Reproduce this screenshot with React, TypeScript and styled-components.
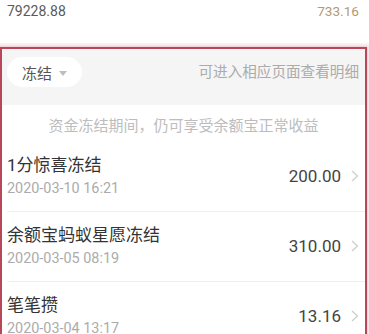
import React from "react";
import styled, { createGlobalStyle } from "styled-components";

const Global = createGlobalStyle`
  html, body { margin: 0; padding: 0; background: #f4f4f4; }
  body { font-family: Roboto, "Noto Sans CJK SC", sans-serif; }
  #root { width: 369px; height: 334px; overflow: hidden; }
`;

const Page = styled.div`
  width: 369px;
  height: 334px;
  overflow: hidden;
  background: #f4f4f4;
`;

const TopBar = styled.div`
  height: 43px;
  box-sizing: border-box;
  padding: 3px 10px 0 7px;
  display: flex;
  justify-content: space-between;
  align-items: flex-start;
  background: #fff;
  font-size: 14px;
  line-height: 16px;
`;

const TopValue = styled.span<{ $gold?: boolean }>`
  color: ${(p) => (p.$gold ? "#b49a72" : "#5a5a5a")};
  font-size: ${(p) => (p.$gold ? "13.6px" : "14px")};
`;

const Frame = styled.div`
  margin: 4px 2px 0 0;
  border: 2px solid #b8475a;
  border-bottom: none;
  box-shadow: 0 0 2px 1px #f3c4cb;
  background: #fff;
`;

const Header = styled.div`
  height: 56px;
  box-sizing: border-box;
  background: #f5f5f5;
  display: flex;
  align-items: flex-start;
  justify-content: space-between;
  padding: 8px 6px 0 5px;
`;

const Pill = styled.div`
  height: 30px;
  width: 75px;
  box-sizing: border-box;
  border-radius: 15px;
  background: #fff;
  display: flex;
  align-items: center;
  gap: 7px;
  padding-left: 15px;
  color: #555;
  font-size: 15px;
`;

const Caret = styled.span`
  width: 0;
  height: 0;
  border-left: 4px solid transparent;
  border-right: 4px solid transparent;
  border-top: 5px solid #bdbdbd;
  margin-top: 2px;
`;

const HeaderHint = styled.span`
  margin-top: 7px;
  color: #ababab;
  font-size: 14.6px;
  line-height: 17px;
`;

const Notice = styled.div`
  height: 37px;
  display: flex;
  align-items: center;
  justify-content: center;
  color: #bdbdbd;
  font-size: 15px;
  padding-top: 1px;
  box-sizing: border-box;
`;

const Row = styled.div`
  height: 70px;
  box-sizing: border-box;
  margin-left: 5px;
  padding: 13px 6px 0 0;
  border-bottom: 1px solid #efefef;
  display: flex;
  justify-content: space-between;
`;

const RowLeft = styled.div`
  display: flex;
  flex-direction: column;
`;

const Title = styled.div`
  font-size: 17px;
  line-height: 20px;
  color: #333;
`;

const Date = styled.div`
  margin-top: 5px;
  font-size: 14.4px;
  line-height: 18px;
  color: #ababab;
`;

const RowRight = styled.div`
  display: flex;
  align-items: center;
  gap: 10px;
  height: 44px;
  margin-top: -1px;
`;

const Amount = styled.span`
  font-size: 17px;
  color: #444;
`;

const Chevron = () => (
  <svg width="8" height="12" viewBox="0 0 8 12">
    <polyline points="1,1 6.5,6 1,11" fill="none" stroke="#cfcfcf" strokeWidth="1.3" />
  </svg>
);

const items = [
  { title: "1分惊喜冻结", date: "2020-03-10 16:21", amount: "200.00" },
  { title: "余额宝蚂蚁星愿冻结", date: "2020-03-05 08:19", amount: "310.00" },
  { title: "笔笔攒", date: "2020-03-04 13:17", amount: "13.16" },
];

export default function App() {
  return (
    <Page>
      <Global />
      <TopBar>
        <TopValue>79228.88</TopValue>
        <TopValue $gold>733.16</TopValue>
      </TopBar>
      <Frame>
        <Header>
          <Pill>
            冻结
            <Caret />
          </Pill>
          <HeaderHint>可进入相应页面查看明细</HeaderHint>
        </Header>
        <Notice>资金冻结期间，仍可享受余额宝正常收益</Notice>
        {items.map((it) => (
          <Row key={it.title}>
            <RowLeft>
              <Title>{it.title}</Title>
              <Date>{it.date}</Date>
            </RowLeft>
            <RowRight>
              <Amount>{it.amount}</Amount>
              <Chevron />
            </RowRight>
          </Row>
        ))}
      </Frame>
    </Page>
  );
}
